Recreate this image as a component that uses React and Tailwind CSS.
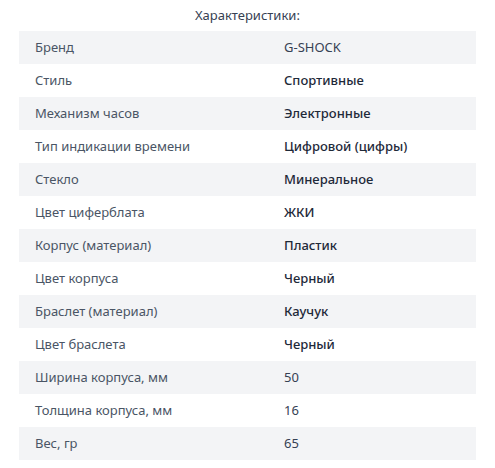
import React from 'react';

const specs = [
  { label: 'Бренд', value: 'G-SHOCK', strong: false },
  { label: 'Стиль', value: 'Спортивные', strong: true },
  { label: 'Механизм часов', value: 'Электронные', strong: true },
  { label: 'Тип индикации времени', value: 'Цифровой (цифры)', strong: true },
  { label: 'Стекло', value: 'Минеральное', strong: true },
  { label: 'Цвет циферблата', value: 'ЖКИ', strong: true },
  { label: 'Корпус (материал)', value: 'Пластик', strong: true },
  { label: 'Цвет корпуса', value: 'Черный', strong: true },
  { label: 'Браслет (материал)', value: 'Каучук', strong: true },
  { label: 'Цвет браслета', value: 'Черный', strong: true },
  { label: 'Ширина корпуса, мм', value: '50', strong: false },
  { label: 'Толщина корпуса, мм', value: '16', strong: false },
  { label: 'Вес, гр', value: '65', strong: false },
];

const App = () => {
  return (
    <div className="w-[495px] h-[468px] bg-white px-[19px] pt-[5px] font-['Noto_Sans',sans-serif] text-[13px]">
      <h2 className="text-center text-[13px] font-normal text-gray-700 leading-[20px] mb-[6px]">
        Характеристики:
      </h2>

      <div className="flex flex-col">
        {specs.map((item, i) => (
          <div
            key={i}
            className={`flex items-center h-[33px] ${i % 2 === 0 ? 'bg-gray-100' : 'bg-white'}`}
          >
            <div className="w-[249px] pl-4 text-gray-600">{item.label}</div>
            <div className={`pl-4 ${item.strong ? 'font-medium text-gray-800' : 'text-gray-700'}`}>
              {item.value}
            </div>
          </div>
        ))}
      </div>
    </div>
  );
};

export default App;
